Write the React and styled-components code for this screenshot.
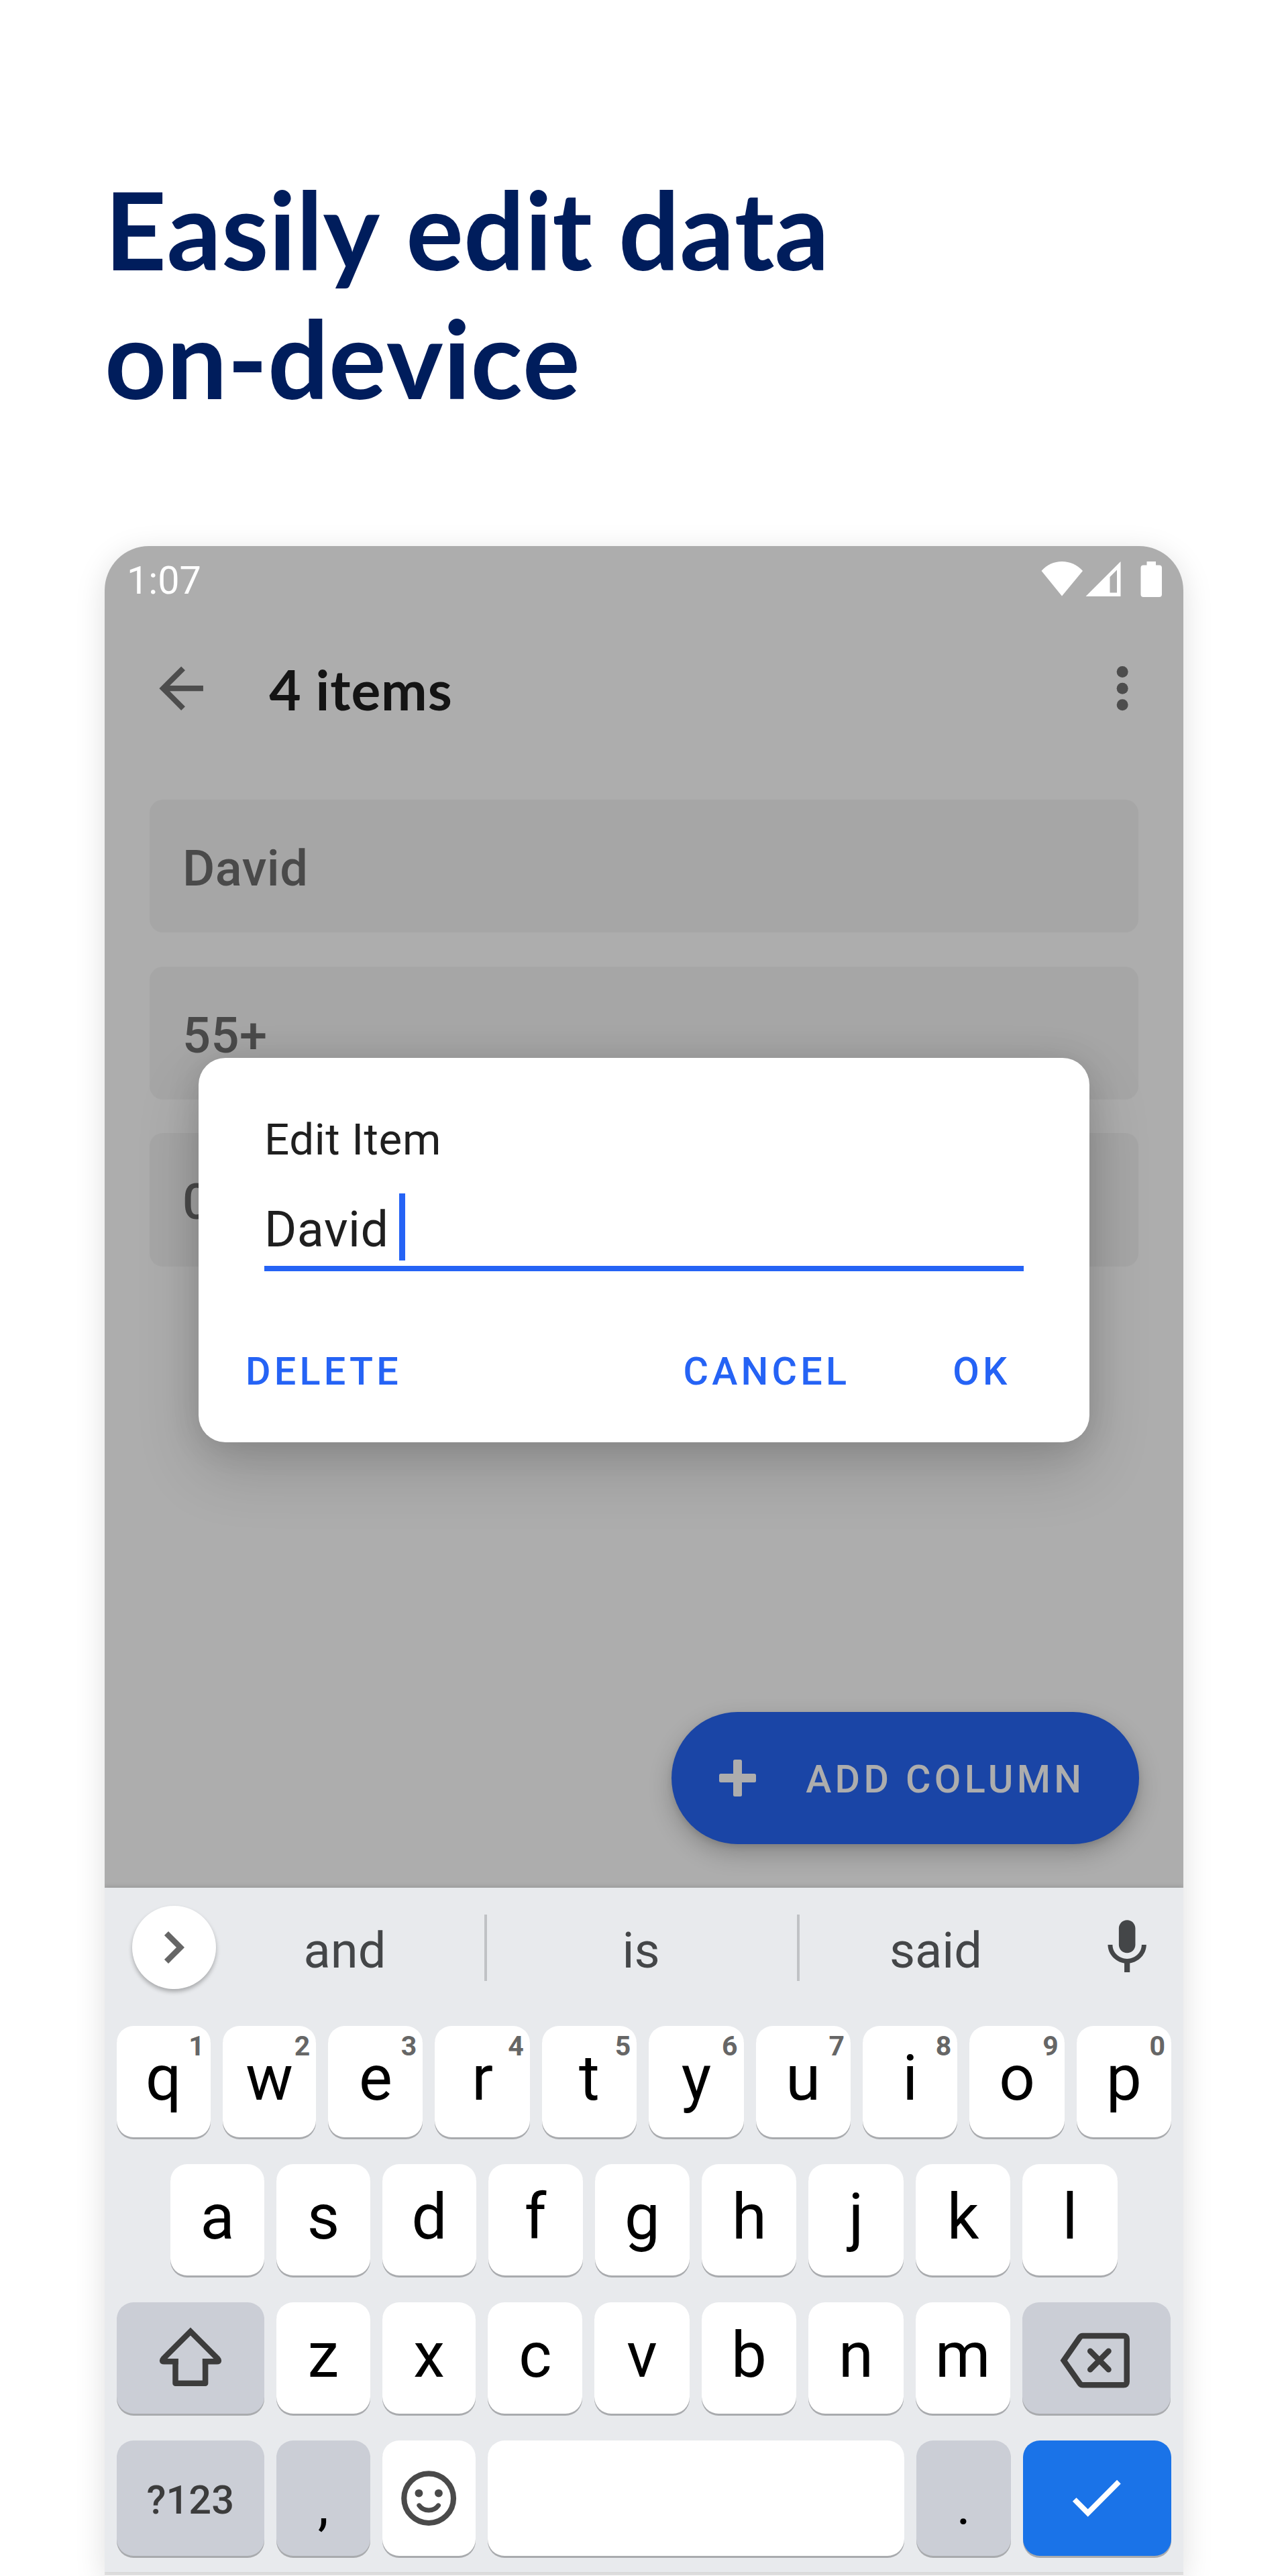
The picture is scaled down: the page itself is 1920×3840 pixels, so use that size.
import React from "react";
import styled, { createGlobalStyle } from "styled-components";

const GlobalStyle = createGlobalStyle`
  *, *::before, *::after { box-sizing: border-box; }
  html, body { margin: 0; background: #ffffff; }
  body { font-family: Roboto, "Liberation Sans", sans-serif; }
  button { font: inherit; border: 0; padding: 0; background: none; }
`;

const Page = styled.main`
  width: 1920px;
  height: 3840px;
  overflow: hidden;
  padding: 245px 156px 0;
  background: #ffffff;
`;

const Headline = styled.h1`
  margin: 0 0 185px;
  color: #001d5c;
  font: 700 160.5px/192px Lato, sans-serif;
  font-kerning: none;
  letter-spacing: 0.1px;
`;

const Phone = styled.section`
  display: flex;
  flex-direction: column;
  width: 1607.7px;
  height: 3026px;
  overflow: hidden;
  border-radius: 66px 66px 0 0;
  background: #ffffff;
  box-shadow: 0 10px 46px rgba(0, 0, 0, 0.13);
`;

const AppScreen = styled.div`
  position: relative;
  display: flex;
  flex-direction: column;
  height: 2000px;
  padding-bottom: 65.5px;
  background: #adadad;
`;

const StatusBar = styled.div`
  display: flex;
  align-items: center;
  justify-content: space-between;
  height: 98px;
  padding: 0 32px 0 33px;
  color: #ffffff;
`;

const Clock = styled.span`
  padding-top: 5px;
  font-size: 57.5px;
  line-height: 68px;
`;

const StatusIcons = styled.svg`
  width: 180px;
  height: 56px;
  fill: currentColor;
`;

const Toolbar = styled.header`
  display: flex;
  align-items: center;
  height: 229px;
  padding: 0 41px 0 65px;
  color: #4d4d4d;
`;

const Icon = styled.svg`
  display: block;
  flex: none;
  width: ${(p) => p.$w || 98.3}px;
  height: ${(p) => p.$h || p.$w || 98.3}px;
  margin-left: ${(p) => (p.$push ? "auto" : 0)};
  fill: ${(p) => (p.$line ? "none" : "currentColor")};
  stroke: ${(p) => (p.$line ? "currentColor" : "none")};
  stroke-width: ${(p) => p.$line || 0};
`;

const ToolbarTitle = styled.h2`
  flex: 1;
  margin: 0 0 0 82px;
  color: #141414;
  font: 700 82px/100px Lato, sans-serif;
  letter-spacing: 0.9px;
`;

const CardList = styled.div`
  display: flex;
  flex-direction: column;
  gap: 50.2px;
  padding: 51px 67px 0;
`;

const Card = styled.div`
  height: 198.4px;
  padding: 8px 49px 0;
  border-radius: 20px;
  background: #a6a6a6;
  color: #4a4a4a;
  font-size: 74px;
  font-weight: 500;
  line-height: 190px;
  letter-spacing: 0.5px;
`;

const Fab = styled.button`
  display: flex;
  align-items: center;
  align-self: flex-end;
  width: 697px;
  height: 196.5px;
  margin: auto 65.5px 0 0;
  padding: 0 0 0 71px;
  border-radius: 99px;
  background: #1a45a6;
  color: #adadad;
  box-shadow: 0 14px 34px rgba(0, 0, 0, 0.22), 0 4px 8px rgba(0, 0, 0, 0.1);
  font-size: 57.5px;
  font-weight: 500;
  letter-spacing: 5.3px;
`;

const FabLabel = styled.span`
  margin-left: 74px;
  padding-top: 6px;
  line-height: 68px;
  white-space: nowrap;
`;

const Dialog = styled.div`
  position: absolute;
  top: 762.5px;
  left: 139.5px;
  width: 1328.5px;
  height: 573.5px;
  padding: 82px 98.5px 0;
  border-radius: 40px;
  background: #ffffff;
  color: #1f1f1f;
  box-shadow: 0 40px 92px rgba(0, 0, 0, 0.17), 0 4px 50px rgba(0, 0, 0, 0.12);
`;

const DialogTitle = styled.div`
  font-size: 65.5px;
  line-height: 80px;
  letter-spacing: 0.6px;
`;

const Field = styled.div`
  display: flex;
  height: 116px;
  margin-top: 40.5px;
  border-bottom: 8px solid #2563f5;
  font-size: 73.7px;
  line-height: 108px;
  letter-spacing: 0.5px;
`;

const Caret = styled.i`
  width: 9px;
  height: 100px;
  margin-left: 15px;
  background: #2563f5;
`;

const DialogActions = styled.div`
  display: flex;
  gap: 153px;
  margin: 100px 19px 0 -28px;
`;

const TextButton = styled.button`
  margin-left: ${(p) => (p.$push ? "auto" : 0)};
  color: #2563f5;
  font-size: 57.5px;
  font-weight: 500;
  line-height: 100px;
  letter-spacing: 5.2px;
`;

const Keyboard = styled.div`
  position: relative;
  height: 1020px;
  background: #e8eaed;
  box-shadow: 0 -2px 6px rgba(0, 0, 0, 0.12);
`;

const Suggestions = styled.div`
  display: flex;
  align-items: center;
  height: 178px;
  padding: 0 34.4px 0 41.3px;
  color: #444648;
`;

const Expand = styled.button`
  display: grid;
  place-items: center;
  width: 124.5px;
  height: 124.5px;
  margin-right: -15.8px;
  border-radius: 50%;
  background: #ffffff;
  color: #666666;
  box-shadow: 0 4px 6px rgba(0, 0, 0, 0.28);
`;

const Suggestion = styled.span`
  width: ${(p) => p.$w}px;
  height: 99px;
  padding: 8px ${(p) => p.$trail || 0}px 0 0;
  border-right: ${(p) => (p.$last ? 0 : "4px solid #c0c2c5")};
  font-size: 74px;
  line-height: 91px;
  text-align: center;
`;

const Keys = styled.div`
  display: flex;
  flex-direction: column;
  gap: 40px;
  padding: 27.6px 17.8px 0;
`;

const KeyRow = styled.div`
  display: flex;
  gap: 18px;
  height: ${(p) => p.$h || 166.3}px;
  padding: 0 ${(p) => p.$inset || 0}px;
`;

const KeyCap = styled.button`
  position: relative;
  display: flex;
  align-items: center;
  justify-content: center;
  flex: ${(p) => (p.$w ? `0 0 ${p.$w}px` : "1 1 0")};
  min-width: 0;
  padding-top: ${(p) => p.$drop || 0}px;
  padding-bottom: ${(p) => p.$lift || 0}px;
  border-radius: 25px;
  background: ${(p) => p.$bg || "#ffffff"};
  color: ${(p) => p.$fg || "#000000"};
  box-shadow: 0 3px 0 #a9abae;
  font-size: ${(p) => p.$size || 94}px;
  font-weight: ${(p) => p.$weight || 400};
  line-height: 110px;
`;

const Hint = styled.sup`
  position: absolute;
  top: 10px;
  right: 9px;
  color: #666666;
  font-size: 41px;
  font-weight: 700;
  line-height: 41px;
`;

const NavEdge = styled.div`
  height: 5px;
  background: #dfdfdf;
`;

const GREY = "#cbced6";

const Letters = ({ text, widths, hints }) =>
  text.split("").map((c, i) => (
    <KeyCap key={c} $lift={9} $w={widths[i] || 141.4}>
      {c}
      {hints && <Hint>{hints[i]}</Hint>}
    </KeyCap>
  ));

export default function App() {
  return (
    <Page>
      <GlobalStyle />
      <Headline>
        Easily edit data
        <br />
        on-device
      </Headline>
      <Phone>
        <AppScreen>
          <StatusBar>
            <Clock>1:07</Clock>
            <StatusIcons viewBox="0 0 180 56">
              <path d="M0.5 16 Q13 2 31 2 Q49 2 62 16 L31 53.5 Z" />
              <path
                fillRule="evenodd"
                d="M66.5 54 L118.5 2 V54 Z M102.5 25 V48.5 H113 V14.5 Z"
              />
              <path d="M157.5 2 H171 V7.5 H176 Q180 7.5 180 11.5 V51 Q180 55 176 55 H152.5 Q148.5 55 148.5 51 V11.5 Q148.5 7.5 152.5 7.5 H157.5 Z" />
            </StatusIcons>
          </StatusBar>
          <Toolbar>
            <Icon viewBox="0 0 24 24">
              <path d="M20 11H7.83l5.59-5.59L12 4l-8 8 8 8 1.41-1.41L7.83 13H20v-2z" />
            </Icon>
            <ToolbarTitle>4 items</ToolbarTitle>
            <Icon viewBox="0 0 24 24">
              <circle cx="12" cy="6" r="2.07" />
              <circle cx="12" cy="12" r="2.07" />
              <circle cx="12" cy="18" r="2.07" />
            </Icon>
          </Toolbar>
          <CardList>
            <Card>David</Card>
            <Card>55+</Card>
            <Card>0</Card>
          </CardList>
          <Fab>
            <Icon $w={55} viewBox="0 0 55 55">
              <rect x="0" y="21" width="55" height="13" rx="2.5" />
              <rect x="21" y="0" width="13" height="55" rx="2.5" />
            </Icon>
            <FabLabel>ADD COLUMN</FabLabel>
          </Fab>
          <Dialog>
            <DialogTitle>Edit Item</DialogTitle>
            <Field>
              <span>David</span>
              <Caret />
            </Field>
            <DialogActions>
              <TextButton>DELETE</TextButton>
              <TextButton $push>CANCEL</TextButton>
              <TextButton>OK</TextButton>
            </DialogActions>
          </Dialog>
        </AppScreen>
        <Keyboard>
          <Suggestions>
            <Expand>
              <Icon $w={60} $line={8.5} viewBox="0 0 60 60">
                <path d="M18 9 L39 30 L18 51" />
              </Icon>
            </Expand>
            <Suggestion $w={420}>and</Suggestion>
            <Suggestion $w={466} $trail={3}>
              is
            </Suggestion>
            <Suggestion $w={406} $last>
              said
            </Suggestion>
            <Icon $push viewBox="0 0 24 24">
              <path d="M12 14c1.66 0 3-1.34 3-3V5c0-1.66-1.34-3-3-3S9 3.34 9 5v6c0 1.66 1.34 3 3 3zm5.3-3c0 3-2.54 5.1-5.3 5.1S6.7 14 6.7 11H5c0 3.41 2.72 6.23 6 6.72V21h2v-3.28c3.28-.48 6-3.3 6-6.72h-1.7z" />
            </Icon>
          </Suggestions>
          <Keys>
            <KeyRow>
              <Letters
                text="qwertyuiop"
                hints="1234567890"
                widths={[140, 139.6, 141]}
              />
            </KeyRow>
            <KeyRow $inset={80.3}>
              <Letters text="asdfghjkl" widths={[140, 140, 139.6, 141]} />
            </KeyRow>
            <KeyRow>
              <KeyCap $w={220} $bg={GREY} $fg="#3c3c3c">
                <Icon $w={100} $line={8.5} viewBox="0 0 100 100">
                  <path d="M31.7 55.3 H10.5 Q6 55.3 10 50.6 L50 10.6 L90 50.6 Q94 55.3 89.5 55.3 H67.9" />
                  <path strokeLinejoin="round" d="M27.5 51 V87.8 H72.1 V51" />
                </Icon>
              </KeyCap>
              <Letters text="zxcvbnm" widths={[140, 139.6, 141]} />
              <KeyCap $w={221} $bg={GREY} $fg="#3c3c3c">
                <Icon $w={120} $h={100} $line={8.5} viewBox="0 0 120 100">
                  <path d="M11.7 53.7 L35.5 19.5 Q37.3 17 40 17 H101 Q105.7 17 105.7 21.7 V85.6 Q105.7 90.3 101 90.3 H40 Q37.3 90.3 35.5 87.8 Z" />
                  <path
                    strokeLinecap="round"
                    d="M51.2 39.8 L78.5 67.2 M78.5 39.8 L51.2 67.2"
                  />
                </Icon>
              </KeyCap>
            </KeyRow>
            <KeyRow $h={172}>
              <KeyCap
                $w={220}
                $bg={GREY}
                $fg="#3c3c3c"
                $size={59.5}
                $weight={500}
                $drop={6}
              >
                ?123
              </KeyCap>
              <KeyCap $w={140} $bg={GREY} $size={82} $drop={21}>
                ,
              </KeyCap>
              <KeyCap $w={139.6} $fg="#4a4a4a">
                <Icon $w={98.3} viewBox="0 0 24 24">
                  <circle
                    cx="12"
                    cy="12"
                    r="9"
                    fill="none"
                    stroke="currentColor"
                    strokeWidth="2"
                  />
                  <circle cx="8.4" cy="10.15" r="1.45" />
                  <circle cx="15.6" cy="10.15" r="1.45" />
                  <path
                    d="M8.5 14.6 Q9.7 16.35 12 16.35 Q14.3 16.35 15.5 14.6"
                    fill="none"
                    stroke="currentColor"
                    strokeWidth="1.7"
                    strokeLinecap="round"
                  />
                </Icon>
              </KeyCap>
              <KeyCap aria-label="space" />
              <KeyCap $w={141.4} $bg={GREY} $size={82} $drop={21}>
                .
              </KeyCap>
              <KeyCap $w={221} $bg="#1a73e8" $fg="#ffffff">
                <Icon $w={80} $h={60} $line={8} viewBox="0 0 80 60">
                  <path d="M6.7 32 L26.7 52 L72.9 5.7" />
                </Icon>
              </KeyCap>
            </KeyRow>
          </Keys>
        </Keyboard>
        <NavEdge />
      </Phone>
    </Page>
  );
}
